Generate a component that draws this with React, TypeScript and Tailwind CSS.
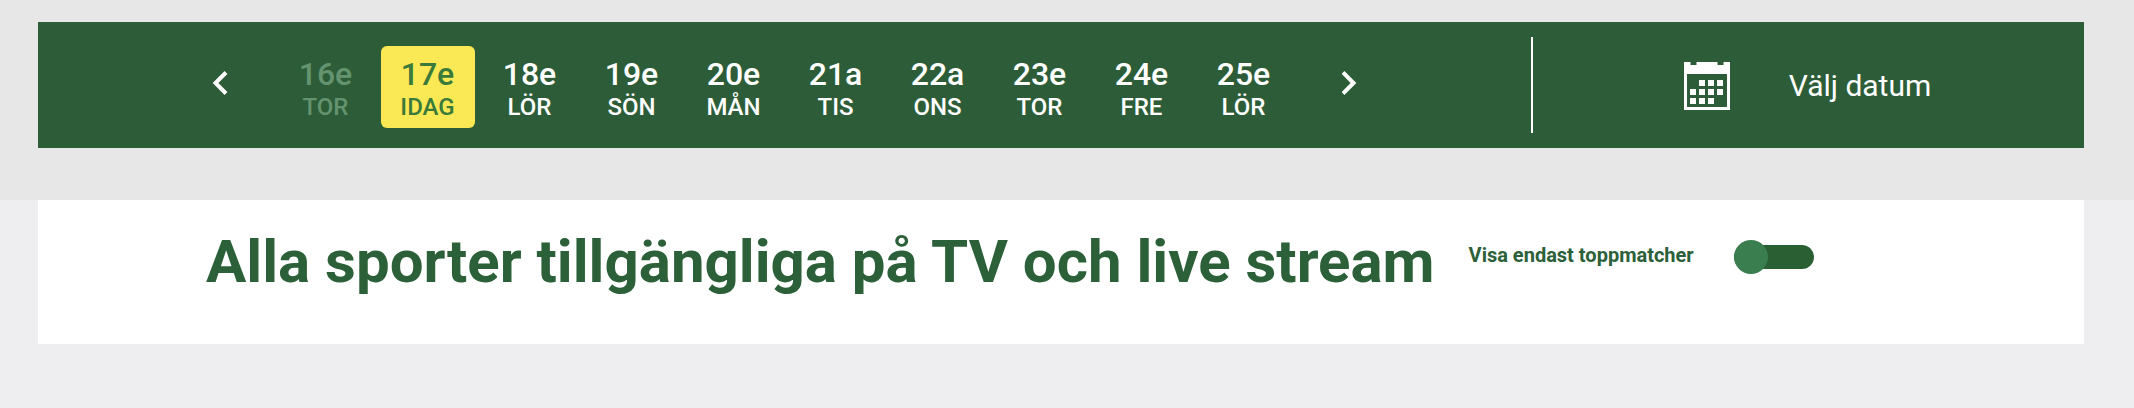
import React, { useState } from "react";

const days = [
  { date: "16e", label: "TOR", past: true },
  { date: "17e", label: "IDAG" },
  { date: "18e", label: "LÖR" },
  { date: "19e", label: "SÖN" },
  { date: "20e", label: "MÅN" },
  { date: "21a", label: "TIS" },
  { date: "22a", label: "ONS" },
  { date: "23e", label: "TOR" },
  { date: "24e", label: "FRE" },
  { date: "25e", label: "LÖR" },
];

const Chevron = ({ points }: { points: string }) => (
  <svg width="16" height="24" viewBox="0 0 16 24" fill="none">
    <polyline points={points} stroke="currentColor" strokeWidth="4" />
  </svg>
);

const CalendarIcon = () => (
  <svg width="46" height="48" viewBox="0 0 46 48" fill="currentColor">
    <path
      fillRule="evenodd"
      d="M0 0H6.5V3H12.5V0H33.5V3H39.5V0H46V48H0ZM3 12V45H43V12Z"
    />
    {/* Day squares */}
    <path d="M15 18h6v6h-6zM24 18h6v6h-6zM33 18h6v6h-6z" />
    <path d="M6 27h6v6h-6zM15 27h6v6h-6zM24 27h6v6h-6zM33 27h6v6h-6z" />
    <path d="M6 36h6v6h-6zM15 36h6v6h-6zM24 36h6v6h-6z" />
  </svg>
);

const DateBar = () => {
  const [selected, setSelected] = useState(1);

  const dayColor = (i: number, past?: boolean) => {
    if (i === selected) return "bg-[#fbe855] text-[#3a7a3b]";
    return past ? "text-[#64946f]" : "text-white";
  };

  return (
    <nav className="flex items-center bg-[#2d5d38] text-white">
      <div className="flex flex-1 items-center justify-center gap-[51px] pt-6 pb-5">
        <button aria-label="Föregående" className="pb-2">
          <Chevron points="14,1.5 3.5,12 14,22.5" />
        </button>
        <div className="flex gap-2">
          {days.map((day, i) => (
            <button
              key={i}
              onClick={() => setSelected(i)}
              className={`flex w-[94px] flex-col items-center rounded-md pt-2.5 pb-1.5 font-medium ${dayColor(i, day.past)}`}
            >
              <span className="text-[32px] leading-9">{day.date}</span>
              <span className="text-2xl leading-[30px]">{day.label}</span>
            </button>
          ))}
        </div>
        <button aria-label="Nästa" className="pb-2">
          <Chevron points="1,1.5 11.5,12 1,22.5" />
        </button>
      </div>
      <div className="h-24 w-0.5 bg-white" />
      <button className="flex w-[551px] items-center justify-center gap-[59px] pt-0.5 pr-0.5">
        <CalendarIcon />
        <span className="text-3xl">Välj datum</span>
      </button>
    </nav>
  );
};

const TopMatchToggle = () => (
  <label className="flex cursor-pointer items-center gap-10 pt-3.5">
    <span className="pb-1 text-xl font-bold leading-6">Visa endast toppmatcher</span>
    <span className="relative flex h-[34px] w-20 items-center">
      <input type="checkbox" className="peer sr-only" />
      <span className="h-6 w-full rounded-full bg-[#295f32]" />
      <span className="absolute left-0 size-[34px] rounded-full bg-[#3a7d4e] peer-checked:left-[46px]" />
    </span>
  </label>
);

const App = () => {
  return (
    <div className="min-h-screen bg-[#eeedef] font-[Roboto,sans-serif]">
      <div className="bg-[#e7e7e7] pt-[22px] pr-[50px] pb-[52px] pl-[38px]">
        <DateBar />
      </div>
      <main className="mr-[50px] ml-[38px] flex items-start gap-[34px] bg-white pt-[26px] pb-[46px] pl-[168px] text-[#2b6038]">
        <h1 className="text-6xl font-bold leading-[72px]">
          Alla sporter tillgängliga på TV och live stream
        </h1>
        <TopMatchToggle />
      </main>
    </div>
  );
};

export default App;
